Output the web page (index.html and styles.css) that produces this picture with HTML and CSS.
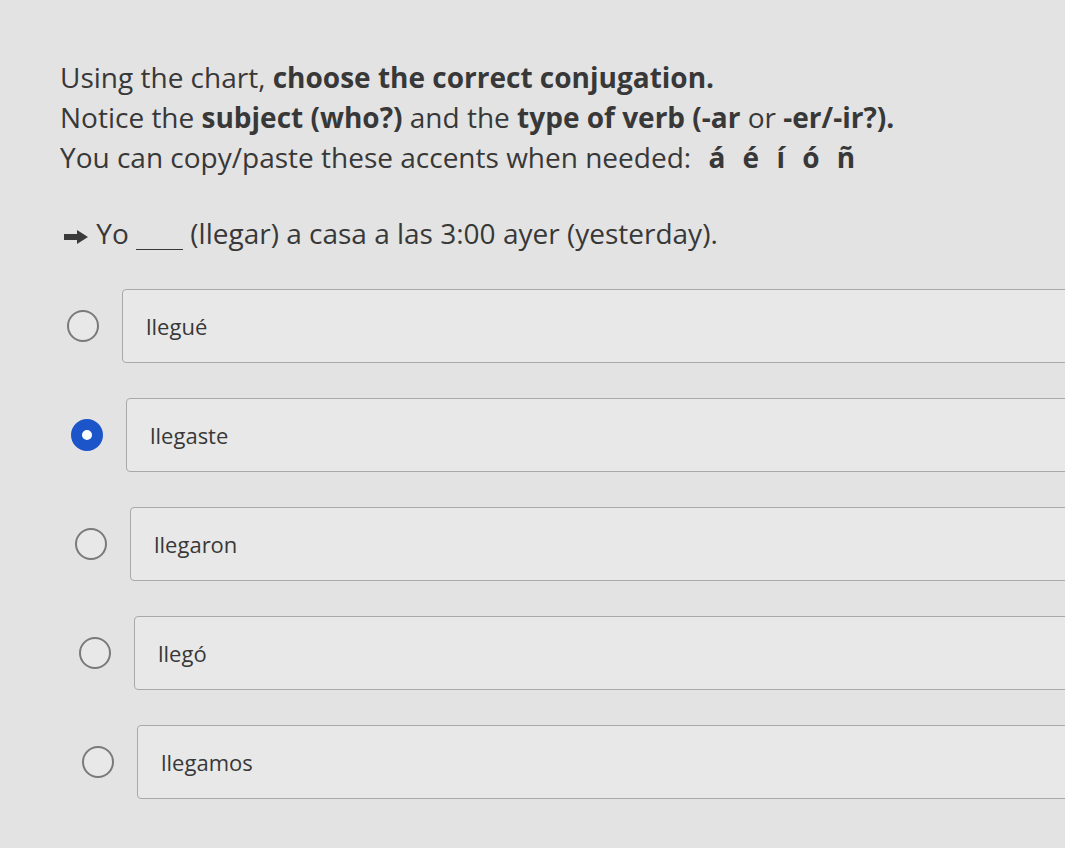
FILE: index.html
```html
<!DOCTYPE html>
<html lang="en">
<head>
	<meta charset="utf-8">
	<title>Conjugation question</title>
	<link rel="stylesheet" href="styles.css">
</head>
<body>
	<div class="question">
		<div class="prompt">
			<p>Using the chart, <b>choose the correct conjugation.</b></p>
			<p>Notice the <b>subject (who?)</b> and the <b>type of verb (-ar</b> or <b>-er/-ir?).</b></p>
			<p>You can copy/paste these accents when needed: <b class="accents">á é í ó ñ</b></p>
		</div>

		<p class="sentence"><svg class="arrow" width="26" height="16" viewBox="0 0 26 16"><path d="M1 5h13V1l11 7-11 7v-4H1z" fill="#3a3a3a"/></svg> Yo <span class="blank"></span> (llegar) a casa a las 3:00 ayer (yesterday).</p>

		<div class="options">
			<label class="option">
				<span class="radio"></span>
				<span class="answer">llegué</span>
			</label>
			<label class="option">
				<span class="radio checked"></span>
				<span class="answer">llegaste</span>
			</label>
			<label class="option">
				<span class="radio"></span>
				<span class="answer">llegaron</span>
			</label>
			<label class="option">
				<span class="radio"></span>
				<span class="answer">llegó</span>
			</label>
			<label class="option">
				<span class="radio"></span>
				<span class="answer">llegamos</span>
			</label>
		</div>
	</div>
</body>
</html>
```

FILE: styles.css
```css
:root {
	--page-bg: #e3e3e3;
	--box-bg: #e8e8e8;
	--box-border: #a9a9a9;
	--text-color: #383838;
	--radio-border: #7a7a7a;
	--radio-checked: #1b55c9;
}
* {
	margin: 0;
	padding: 0;
	box-sizing: border-box;
}
html, body {
	background: var(--page-bg);
	overflow: hidden;
}
body {
	font-family: "Open Sans", "Noto Sans", sans-serif;
	color: var(--text-color);
}
.question {
	padding: 57px 0 0 60px;
}
.prompt p {
	font-size: 28px;
	line-height: 40px;
	white-space: nowrap;
}
.prompt b {
	font-weight: 700;
}
.accents {
	word-spacing: 10px;
	margin-left: 10px;
}
.sentence {
	margin-top: 36px;
	margin-left: 3px;
	font-size: 28px;
	line-height: 40px;
	white-space: nowrap;
}
.arrow {
	vertical-align: -1px;
}
.blank {
	display: inline-block;
	width: 47px;
	height: 24px;
	border-bottom: 1.5px solid var(--text-color);
	vertical-align: -6px;
}
.options {
	display: flex;
	flex-direction: column;
	gap: 35px;
	margin-top: 36px;
	margin-left: 7px;
}
.option {
	display: flex;
	align-items: center;
	gap: 23px;
	margin-right: -20px;
}
.option:nth-child(2) { margin-left: 4px; }
.option:nth-child(3) { margin-left: 8px; }
.option:nth-child(4) { margin-left: 12px; }
.option:nth-child(5) { margin-left: 15px; }
.radio {
	flex: none;
	width: 32px;
	height: 32px;
	border-radius: 50%;
	border: 2px solid var(--radio-border);
	background: var(--box-bg);
}
.radio.checked {
	border: 11px solid var(--radio-checked);
	background: #fff;
}
.answer {
	flex: 1;
	height: 74px;
	display: flex;
	align-items: center;
	padding-left: 23px;
	font-size: 22px;
	background: var(--box-bg);
	border: 1.5px solid var(--box-border);
	border-radius: 4px;
}
```
